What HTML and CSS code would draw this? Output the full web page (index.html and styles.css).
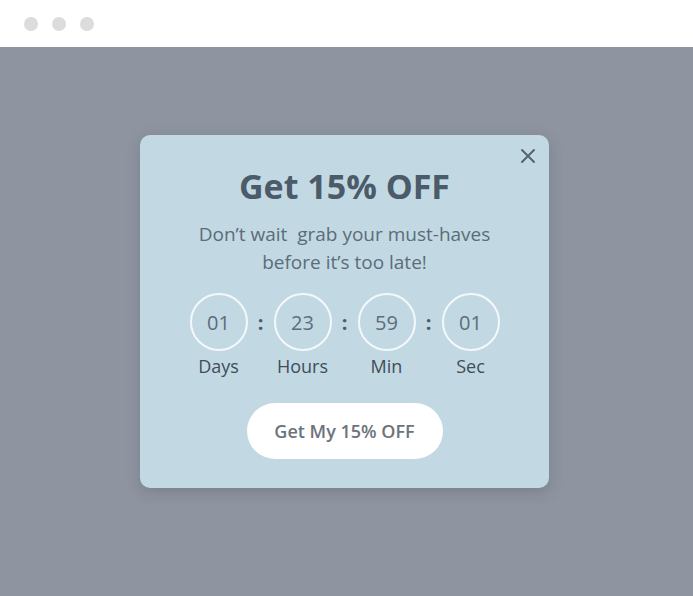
FILE: index.html
```html
<!DOCTYPE html>
<html>
<head>
<meta charset="utf-8">
<link rel="stylesheet" href="styles.css">
</head>
<body>
<div class="topbar">
  <span class="dot"></span><span class="dot"></span><span class="dot"></span>
</div>
<div class="stage">
  <div class="popup">
    <button class="close" aria-label="Close">
      <svg width="16" height="16" viewBox="0 0 16 16"><path d="M2 2L14 14M14 2L2 14" stroke="#56636f" stroke-width="2" stroke-linecap="round"/></svg>
    </button>
    <h1 class="title">Get 15% OFF</h1>
    <p class="subtitle">Don’t wait&nbsp; grab your must-haves<br>before it’s too late!</p>
    <div class="timer">
      <div class="unit"><div class="circle">01</div><div class="label">Days</div></div>
      <div class="sep">:</div>
      <div class="unit"><div class="circle">23</div><div class="label">Hours</div></div>
      <div class="sep">:</div>
      <div class="unit"><div class="circle">59</div><div class="label">Min</div></div>
      <div class="sep">:</div>
      <div class="unit"><div class="circle">01</div><div class="label">Sec</div></div>
    </div>
    <button class="cta">Get My 15% OFF</button>
  </div>
</div>
</body>
</html>
```
FILE: styles.css
```css
* { box-sizing: border-box; }
html, body { margin: 0; padding: 0; }
body {
  font-family: "Open Sans", "Noto Sans", sans-serif;
  width: 693px;
  height: 596px;
  overflow: hidden;
  background: #8e94a0;
}
.topbar {
  height: 47px;
  background: #ffffff;
  display: flex;
  align-items: center;
  gap: 14px;
  padding-left: 24px;
}
.dot {
  width: 14px;
  height: 14px;
  border-radius: 50%;
  background: #dcdcdc;
}
.stage {
  height: 549px;
  padding: 88px 0 0 140px;
}
.popup {
  position: relative;
  width: 409px;
  height: 353px;
  background: #c2d9e4;
  border-radius: 10px;
  box-shadow: 0 4px 14px rgba(60, 70, 85, 0.25);
  display: flex;
  flex-direction: column;
  align-items: center;
  padding-top: 31px;
}
.close {
  position: absolute;
  top: 11px;
  right: 11px;
  width: 20px;
  height: 20px;
  padding: 0;
  border: 0;
  background: none;
  display: flex;
  align-items: center;
  justify-content: center;
}
.title {
  margin: 0;
  font-size: 34px;
  line-height: 40px;
  font-weight: 700;
  color: #4b5b69;
}
.subtitle {
  margin: 14px 0 0;
  text-align: center;
  font-size: 19px;
  line-height: 28px;
  color: #5c6c79;
}
.timer {
  margin-top: 17px;
  display: flex;
  align-items: flex-start;
}
.unit {
  display: flex;
  flex-direction: column;
  align-items: center;
  width: 58px;
}
.circle {
  width: 58px;
  height: 58px;
  border: 2px solid #f4f8fa;
  border-radius: 50%;
  display: flex;
  align-items: center;
  justify-content: center;
  font-size: 20px;
  color: #5d6d7a;
}
.label {
  margin-top: 3px;
  font-size: 18px;
  line-height: 24px;
  color: #3f4d59;
  white-space: nowrap;
}
.sep {
  width: 26px;
  height: 58px;
  display: flex;
  align-items: center;
  justify-content: center;
  font-size: 20px;
  font-weight: 700;
  color: #4b5b69;
}
.cta {
  margin-top: 25px;
  width: 196px;
  height: 56px;
  border: 0;
  border-radius: 28px;
  background: #ffffff;
  font-family: inherit;
  font-size: 18px;
  font-weight: 600;
  color: #6b747d;
}
```
